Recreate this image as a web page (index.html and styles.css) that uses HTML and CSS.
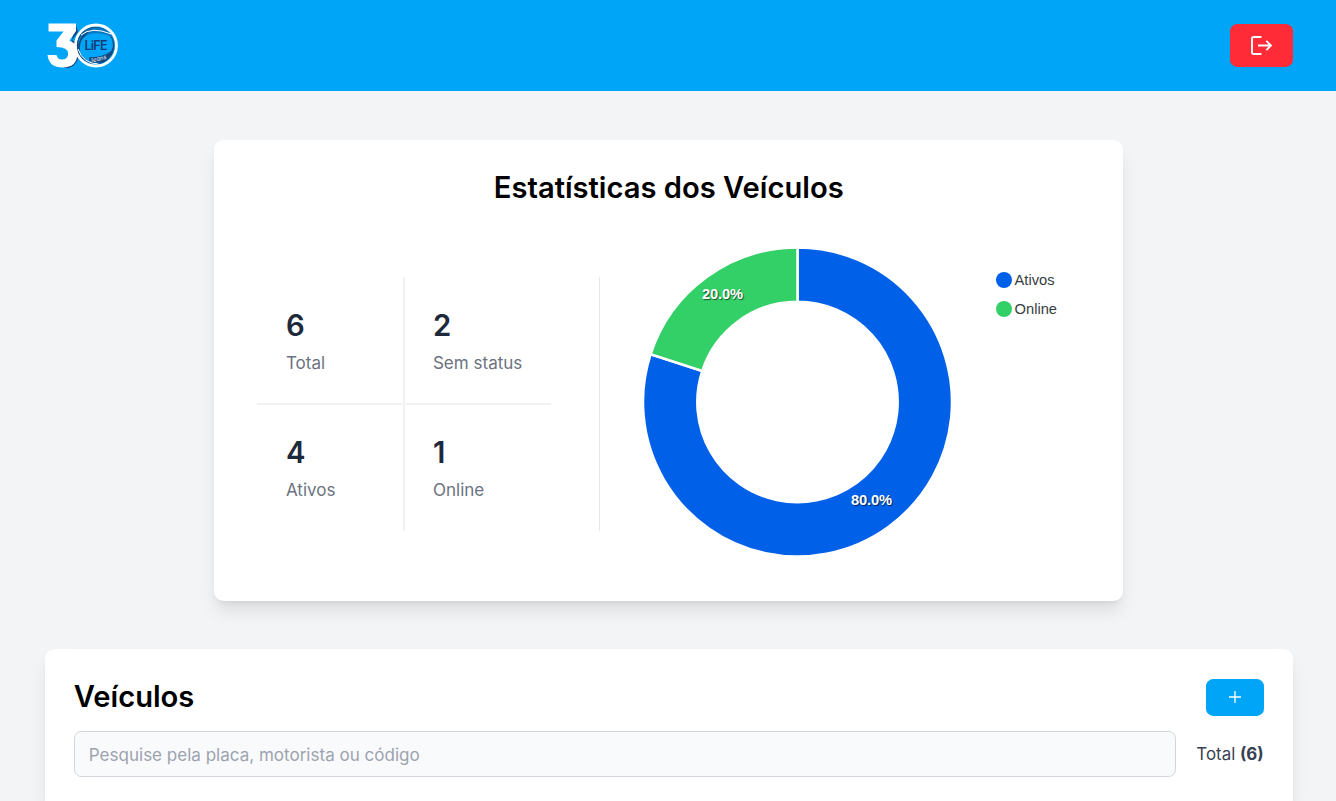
FILE: index.html
```html
<!DOCTYPE html>
<html lang="pt-BR">
<head>
<meta charset="utf-8">
<title>Veículos</title>
<link rel="stylesheet" href="styles.css">
</head>
<body>
<header class="header">
  <svg class="logo" viewBox="0 0 72 48" role="img" aria-label="30 Life">
    <path d="M29 3L31 10L25 18Q33 22 32.500 31Q31 43 22 46L17 46Z" fill="#14477f"/>
    <path d="M1.500 1.500H29V9L22.500 18.500Q30.500 22 30.500 30.500Q30.500 45.500 15.500 45.500Q2 45.500 .500 33H9.500Q10.500 37.500 15 37.500Q21 37.500 21 31.500Q21 25 9.500 25V18.500L16.500 9.500H1.500Z" fill="#fff"/>
    <circle cx="49" cy="23.500" r="20.500" fill="none" stroke="#fff" stroke-width="2.800"/>
    <circle cx="48.500" cy="23.500" r="18" fill="none" stroke="#14477f" stroke-width="1.200"/>
    <path d="M33 16Q41 3 54 6Q62 9 65 15Q55 10 45 11.500Q38 13 33 20Z" fill="#0877bf"/>
    <path d="M31 23Q34 11 46 6Q40 11 36 16Q32 21 33 30Z" fill="#14477f"/>
    <path d="M34 13Q45 4 64 12M31 27Q36 42 52 42" fill="none" stroke="#fff" stroke-width="1"/>
    <path d="M62 31Q67 27 66.500 19Q69 29 62 36Q58 41 50 42Q57 39 62 31Z" fill="#14477f"/>
    <path d="M42.500 35Q54 36 63 30Q60 38 53 40Q46 42 42 39Z" fill="#14477f"/>
    <text x="49" y="27.500" class="logo-name" textLength="23">LiFE</text>
    <text x="51.500" y="39" class="logo-sub" transform="rotate(-14 51 39)">Jeans</text>
  </svg>
  <button class="logout" aria-label="Sair">
    <svg viewBox="0 0 24 24" width="24" height="24"><path d="M12.500 3H4.800Q3 3 3 4.800V18.200Q3 20 4.800 20H12.500M9 11.500H21.500M17.300 6.800L22 11.500L17.300 16.200" fill="none" stroke="#fff" stroke-width="1.900"/></svg>
  </button>
</header>
<main class="main">
  <section class="card stats-card">
    <h2 class="title centered">Estatísticas dos Veículos</h2>
    <div class="overview">
      <div class="stats-wrap">
        <div class="stats">
          <div class="stat"><strong>6</strong><span>Total</span></div>
          <div class="stat"><strong>2</strong><span>Sem status</span></div>
          <div class="stat"><strong>4</strong><span>Ativos</span></div>
          <div class="stat"><strong>1</strong><span>Online</span></div>
        </div>
      </div>
      <svg class="donut" viewBox="-155 -155 310 310" width="310" height="310">
        <g stroke="#fff" stroke-width="2.500" transform="translate(.5 0)">
          <path fill="#0061e8" d="M0-154.500A154.500 154.500 0 1 1-146.940-47.740L-95.300-30.960A100.200 100.200 0 1 0 0-100.200Z"/>
          <path fill="#33d067" d="M-146.940-47.740A154.500 154.500 0 0 1 0-154.500V-100.200A100.200 100.200 0 0 0-95.300-30.960Z"/>
        </g>
        <text class="percent" x="-74.500" y="-103">20.0%</text>
        <text class="percent" x="74.500" y="103">80.0%</text>
      </svg>
      <ul class="legend">
        <li><i class="dot blue"></i>Ativos</li>
        <li><i class="dot green"></i>Online</li>
      </ul>
    </div>
  </section>
  <section class="card vehicles">
    <div class="row">
      <h2 class="title">Veículos</h2>
      <button class="add" aria-label="Adicionar"><svg viewBox="0 0 12 12" width="12" height="12"><path d="M6 0V12M0 6H12" stroke="#fff" stroke-width="1.300"/></svg></button>
    </div>
    <div class="row search-row">
      <input class="search" type="text" placeholder="Pesquise pela placa, motorista ou código">
      <span class="total">Total <b>(6)</b></span>
    </div>
  </section>
</main>
</body>
</html>
```
FILE: styles.css
```css
* { box-sizing: border-box; }
body {
  margin: 0;
  height: 801px;
  overflow: hidden;
  background: #f3f4f6;
  font-family: Inter, "Liberation Sans", sans-serif;
  color: #000;
}
.header {
  height: 91px;
  padding: 0 43px 0 47px;
  display: flex;
  align-items: center;
  justify-content: space-between;
  background: #00a5f7;
}
.logo { width: 72px; height: 48px; overflow: visible; }
.logo-name { font: 600 12.500px Inter, sans-serif; fill: #123b76; text-anchor: middle; }
.logo-sub { font: italic 6px Inter, sans-serif; fill: #e4f5ff; text-anchor: middle; }
button { border: 0; padding: 0; display: flex; align-items: center; justify-content: center; }
.logout { width: 63px; height: 43px; border-radius: 7.300px; background: #ff2b37; }
.logout svg { margin-right: 1px; }
.main { padding: 48.500px 43px 0 44.500px; }
.card {
  background: #fff;
  border-radius: 9.800px;
  box-shadow: 0 12.200px 18.300px -3.700px rgb(0 0 0 / 10%), 0 4.900px 7.300px -4.900px rgb(0 0 0 / 10%);
}
.stats-card { width: 909px; height: 461px; margin: 0 auto; padding: 28.300px 43px 29px; }
.title { margin: 0; font-size: 29.150px; line-height: 39px; font-weight: 600; }
.centered { text-align: center; }
.overview { display: flex; margin-top: 40px; }
.stats-wrap {
  width: 343px;
  height: 254px;
  margin-top: 30px;
  border-right: 1.200px solid #e5e7eb;
  flex: none;
}
.stats { width: 294px; display: grid; grid-template-columns: 148px 146px; grid-template-rows: 128px 126px; }
.stat { padding: 29.300px 28.700px 0; display: flex; flex-direction: column; white-space: nowrap; }
.stat:nth-child(even) { padding-left: 27.700px; }
.stat:nth-child(n+3) { padding-top: 28.300px; }
.stat:nth-child(odd) { border-right: 2px solid #f1f2f4; }
.stat:nth-child(-n+2) { border-bottom: 2px solid #f1f2f4; }
.stat strong { font-size: 29.300px; line-height: 39px; font-weight: 600; color: #1e293b; }
.stat span { margin-top: 6px; font-size: 17.050px; line-height: 24.400px; color: #6b7280; }
.donut { flex: none; margin-left: 41.800px; }
.percent {
  font: bold 14.700px "Liberation Sans", Arial, sans-serif;
  fill: #fff;
  text-anchor: middle;
  letter-spacing: -0.100px;
  text-shadow: 1px 1px 1px rgb(0 0 0 / 60%);
}
.legend { list-style: none; margin: 18.500px 0 0 43.500px; padding: 0; font: 14.700px/29px "Liberation Sans", Arial, sans-serif; color: #373d3f; }
.legend li { display: flex; align-items: center; gap: 3px; height: 29px; padding-top: 1px; }
.dot { width: 16px; height: 16px; margin-top: -1px; border-radius: 50%; }
.blue { background: #0061e8; }
.green { background: #33d067; }
.vehicles { height: 152px; border-radius: 9.800px 9.800px 0 0; margin-top: 48.500px; padding: 28.500px 29.300px 0; }
.row { display: flex; align-items: center; justify-content: space-between; }
.row .title { margin-top: -1px; margin-bottom: 1px; }
.add { width: 57.500px; height: 37px; border-radius: 7.300px; background: #00a5f7; }
.search-row { gap: 20px; margin-top: 14.500px; }
.search {
  flex: 1;
  height: 46px;
  padding: 0 14px;
  border: 1.200px solid #d1d5db;
  border-radius: 7.300px;
  background: #f9fafb;
  font: 17.050px Inter, sans-serif;
}
.search::placeholder { color: #9ca3af; opacity: 1; }
.total { font-size: 16.900px; color: #374151; white-space: nowrap; }
```
